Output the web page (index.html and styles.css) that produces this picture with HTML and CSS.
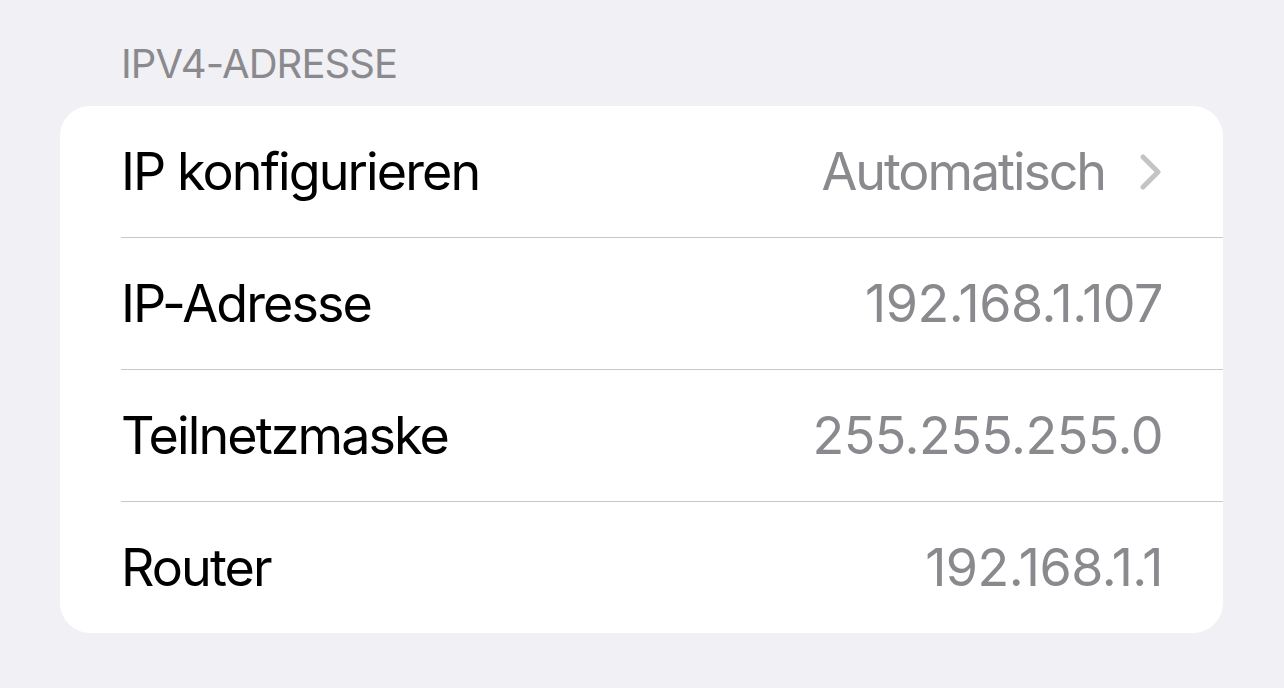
FILE: index.html
```html
<!DOCTYPE html>
<html lang="de">
<head>
    <meta charset="UTF-8">
    <meta name="viewport" content="width=device-width, initial-scale=1.0">
    <title>IPv4-Adresse</title>
    <link rel="stylesheet" href="styles.css">
</head>
<body>

    <div class="section">
        <div class="section-title">IPV4-ADRESSE</div>

        <div class="group">
            <div class="row">
                <span class="label">IP konfigurieren</span>
                <span class="value">Automatisch</span>
                <svg class="chevron" width="22" height="36" viewBox="0 0 22 36">
                    <path d="M3 3 L18 18 L3 33" fill="none" stroke="#c4c4c7" stroke-width="5" stroke-linecap="round" stroke-linejoin="round"/>
                </svg>
            </div>
            <div class="row">
                <span class="label">IP-Adresse</span>
                <span class="value num">192.168.1.107</span>
            </div>
            <div class="row">
                <span class="label">Teilnetzmaske</span>
                <span class="value num">255.255.255.0</span>
            </div>
            <div class="row">
                <span class="label">Router</span>
                <span class="value num">192.168.1.1</span>
            </div>
        </div>
    </div>

</body>
</html>
```

FILE: styles.css
```css
html, body {
    height: 100%;
}
body {
    margin: 0;
    background-color: #f0f0f5;
    font-family: Inter, "Liberation Sans", sans-serif;
}
.section {
    padding: 40px 61px 0 60px;
}
.section-title {
    font-size: 40px;
    color: #8a8a8e;
    padding-left: 61px;
    line-height: 48px;
    letter-spacing: -0.9px;
    margin-bottom: 18px;
}
.group {
    background-color: #fff;
    border-radius: 30px;
    overflow: hidden;
}
.row {
    display: flex;
    align-items: center;
    height: 131px;
    margin-left: 61px;
    padding-right: 60px;
    border-top: 1px solid #c8c7cc;
}
.row:first-child {
    border-top: none;
}
.label {
    flex: 1;
    font-size: 52px;
    letter-spacing: -1.9px;
    color: #000;
}
.value {
    font-size: 52px;
    letter-spacing: -2.1px;
    color: #8a8a8e;
}
.num {
    letter-spacing: -0.5px;
}
.chevron {
    margin-left: 35px;
    margin-right: 1px;
}
```
